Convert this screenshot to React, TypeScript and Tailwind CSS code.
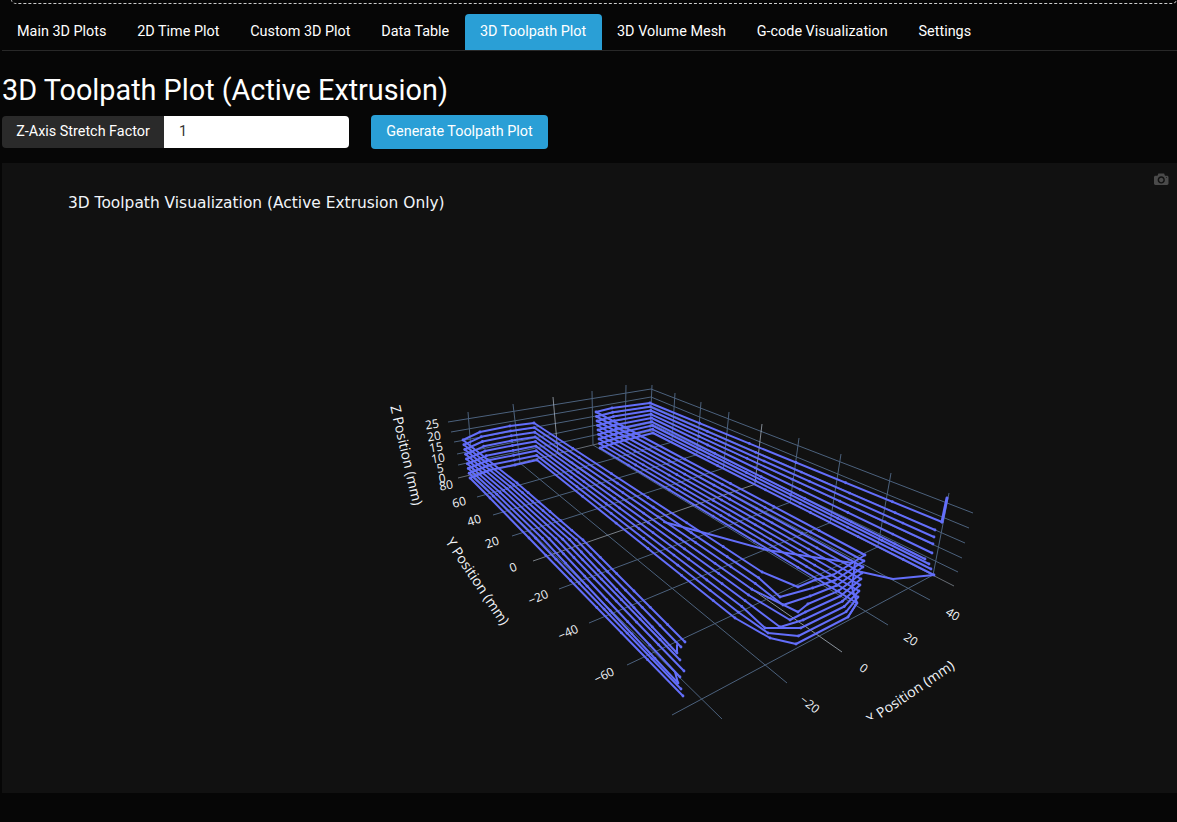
type P = [number, number];
const lerp = (a: P, b: P, t: number): P => [a[0] + (b[0] - a[0]) * t, a[1] + (b[1] - a[1]) * t];
const pts = (l: P[]) => l.map((p) => `${p[0].toFixed(1)},${p[1].toFixed(1)}`).join(" ");

const tabs = ["Main 3D Plots", "2D Time Plot", "Custom 3D Plot", "Data Table", "3D Toolpath Plot", "3D Volume Mesh", "G-code Visualization", "Settings"];

const LAYERS = 9;
const leftTips: P[] = [[685, 642], [681, 647], [677, 653], [680, 660], [684, 671], [680, 677], [678, 683], [681, 689], [683, 696]];
const rightTips: P[] = [[942, 522], [935, 530], [934, 537], [933, 544], [932, 553], [925, 559], [929, 564], [931, 569], [934, 575]];
const corner1: P[] = [[798, 587], [780, 597], [783, 605], [798, 612], [790, 620], [780, 627], [765, 628], [768, 633], [770, 638]];
const before: [P, P][] = [
  [[583, 540], [529, 538]],
  [[517, 483], [490, 498]],
  [[463, 440], [470, 478]],
  [[480, 432], [490, 470]],
  [[510, 426], [515, 465]],
  [[534, 423], [537, 460]],
  [[762, 572], [735, 618]],
];
const after: [P, P][] = [
  [[815, 580], [796, 644]],
  [[833, 575], [848, 617]],
  [[865, 555], [857, 603]],
  [[596, 412], [600, 448]],
  [[612, 408], [618, 442]],
  [[650, 403], [653, 433]],
];

const layers: P[][] = Array.from({ length: LAYERS }, (_, k) => {
  const t = k / (LAYERS - 1);
  return [
    leftTips[k],
    ...before.map((c) => lerp(c[0], c[1], t)),
    corner1[k],
    ...after.map((c) => lerp(c[0], c[1], t)),
    rightTips[k],
  ];
});

const markers: P[] = [];
layers.forEach((l, k) => {
  l.forEach((p, i) => {
    markers.push(p);
    const n = l[i + 1];
    if (n && Math.hypot(n[0] - p[0], n[1] - p[1]) > 80) {
      [0.17, 0.34, 0.5, 0.67, 0.83].forEach((f) => markers.push(lerp(p, n, f + (k % 3) * 0.03)));
    }
  });
});

const zLeft: P[] = [[448, 422], [451, 432], [454, 442], [457, 454], [458, 465], [458, 478]];
const zBack: P[] = [[651, 389], [651, 397], [651, 406], [650, 414], [650, 423], [650, 431]];
const zRight: P[] = [[973, 513], [969, 528], [965, 543], [962, 558], [958, 572], [954, 586]];
const xLines: [P, P, boolean][] = [
  [[473, 475], [723, 720], false],
  [[520, 463], [787, 683], false],
  [[558, 454], [842, 652], true],
  [[593, 445], [888, 625], false],
  [[625, 437], [930, 600], false],
];
const leftV: [P, P, boolean][] = [
  [[468, 412], [473, 475], false],
  [[513, 404], [520, 463], false],
  [[553, 397], [558, 454], true],
  [[592, 391], [593, 445], false],
  [[626, 385], [625, 437], false],
  [[652, 385], [650, 431], false],
];
const yTop: P[] = [[675, 393], [701, 402], [729, 412], [762, 424], [799, 438], [841, 454], [891, 473], [949, 493]];
const yStart: P[] = [[477, 497], [493, 515], [512, 536], [533, 561], [559, 589], [589, 623], [627, 665], [672, 715]];
const yBottom: P[] = yTop.map((p) => {
  const x = 650 + (p[0] - 652) * (283 / 297);
  return [x, 431 + (x - 650) * 0.509] as P;
});

const labels: { t: string; x: number; y: number; r: number }[] = [
  { t: "25", x: 432, y: 424, r: -10 },
  { t: "20", x: 434, y: 436, r: -10 },
  { t: "15", x: 436, y: 447, r: -10 },
  { t: "10", x: 438, y: 458, r: -10 },
  { t: "5", x: 440, y: 468, r: -10 },
  { t: "0", x: 442, y: 478, r: -10 },
  { t: "80", x: 446, y: 485, r: -12 },
  { t: "60", x: 459, y: 502, r: -15 },
  { t: "40", x: 474, y: 520, r: -18 },
  { t: "20", x: 492, y: 542, r: -20 },
  { t: "0", x: 513, y: 567, r: -22 },
  { t: "−20", x: 538, y: 597, r: -24 },
  { t: "−40", x: 568, y: 632, r: -25 },
  { t: "−60", x: 604, y: 675, r: -27 },
  { t: "−20", x: 810, y: 704, r: 38 },
  { t: "0", x: 864, y: 668, r: 36 },
  { t: "20", x: 911, y: 639, r: 34 },
  { t: "40", x: 953, y: 614, r: 32 },
];
const titles: { t: string; x: number; y: number; r: number }[] = [
  { t: "Z Position (mm)", x: 407, y: 455, r: 77 },
  { t: "Y Position (mm)", x: 478, y: 581, r: 56 },
  { t: "X Position (mm)", x: 910, y: 692, r: -34 },
];

const G = "#506784";
const Z = "#c8d4e3";

function Plot() {
  return (
    <svg viewBox="2 163 1175 630" className="block w-full h-full" style={{ fontFamily: "'Open Sans', sans-serif" }}>
      <defs>
        <clipPath id="scene">
          <rect x="2" y="163" width="1175" height="556" />
        </clipPath>
      </defs>
      <text x="68" y="208" fontSize="15.45" fill="#f2f5fa" style={{ fontFamily: "'DejaVu Sans', sans-serif" }}>
        3D Toolpath Visualization (Active Extrusion Only)
      </text>
      <g clipPath="url(#scene)">
        <g strokeWidth="1" fill="none" opacity="0.95">
          {zLeft.map((p, i) => (
            <line key={`a${i}`} x1={p[0]} y1={p[1]} x2={zBack[i][0]} y2={zBack[i][1]} stroke={i === 5 ? Z : G} strokeOpacity={i === 5 ? 0.5 : 1} />
          ))}
          {zRight.map((p, i) => (
            <line key={`b${i}`} x1={zBack[i][0]} y1={zBack[i][1]} x2={p[0]} y2={p[1]} stroke={i === 5 ? Z : G} strokeOpacity={i === 5 ? 0.5 : 1} />
          ))}
          {xLines.map(([a, b, z], i) => (
            <line key={`c${i}`} x1={a[0]} y1={a[1]} x2={b[0]} y2={b[1]} stroke={z ? Z : G} strokeOpacity={z ? 0.7 : 1} />
          ))}
          {leftV.map(([a, b, z], i) => (
            <line key={`d${i}`} x1={a[0]} y1={a[1]} x2={b[0]} y2={b[1]} stroke={z ? Z : G} strokeOpacity={z ? 0.65 : 1} />
          ))}
          {yTop.map((p, i) => (
            <line key={`e${i}`} x1={p[0]} y1={p[1]} x2={yBottom[i][0]} y2={yBottom[i][1]} stroke={i === 3 ? Z : G} strokeOpacity={i === 3 ? 0.65 : 1} />
          ))}
          {yStart.map((p, i) => (
            <line key={`f${i}`} x1={p[0]} y1={p[1]} x2={yBottom[i][0]} y2={yBottom[i][1]} stroke={i === 3 ? Z : G} strokeOpacity={i === 3 ? 0.6 : 1} />
          ))}
        </g>
        <g fill="none" stroke="#636efa" strokeWidth="2" strokeLinejoin="round" strokeLinecap="round">
          {layers.map((l, i) => (
            <polyline key={i} points={pts(l)} />
          ))}
          <polyline points="664,522 705,533 767,550 852,563" />
          <polyline points="857,571 893,579 934,575" />
          <polyline points="855,562 852,588 857,603 848,617" />
          <polyline points="947,498 942,522" strokeWidth="3" />
          <polyline points="677,645 677,653" />
          <polyline points="675,672 678,683" />
        </g>
        <g fill="#636efa">
          {markers.map((p, i) => (
            <circle key={i} cx={p[0]} cy={p[1]} r="1.4" />
          ))}
        </g>
        <g fill="#f2f5fa" textAnchor="middle" dominantBaseline="central">
          {labels.map((l, i) => (
            <text key={i} transform={`translate(${l.x} ${l.y}) rotate(${l.r})`} fontSize="12">
              {l.t}
            </text>
          ))}
          {titles.map((l, i) => (
            <text key={i} transform={`translate(${l.x} ${l.y}) rotate(${l.r})`} fontSize="14">
              {l.t}
            </text>
          ))}
        </g>
      </g>
      <g transform="translate(1154 172) scale(0.0145)" fill="#4a4a4a">
        <path
          transform="matrix(1 0 0 -1 0 850)"
          d="m500 450c-83 0-150-67-150-150 0-83 67-150 150-150 83 0 150 67 150 150 0 83-67 150-150 150z m400 150h-120c-16 0-34 13-39 29l-31 93c-6 15-23 28-40 28h-340c-16 0-34-13-39-28l-31-94c-5-15-23-28-40-28h-120c-55 0-100-45-100-100v-450c0-55 45-100 100-100h800c55 0 100 45 100 100v450c0 55-45 100-100 100z m-400-550c-138 0-250 112-250 250 0 138 112 250 250 250 138 0 250-112 250-250 0-138-112-250-250-250z m365 380c-19 0-35 16-35 35 0 19 16 35 35 35 19 0 35-16 35-35 0-19-16-35-35-35z"
        />
      </g>
    </svg>
  );
}

export default function App() {
  return (
    <div className="h-[822px] w-full overflow-hidden bg-[#060606] font-['Roboto',sans-serif] text-white">
      <div className="h-[14px] overflow-hidden pl-[11px]">
        <div className="-mt-[56px] h-[60px] rounded-[5px] border border-dashed border-[#cccccc]" />
      </div>
      <nav className="ml-[1.6px] flex h-[37px] border-b border-[#282828]">
        {tabs.map((t) => (
          <div
            key={t}
            className={
              t === "3D Toolpath Plot"
                ? "flex h-[36px] items-center rounded-t-[4px] bg-[#2a9fd6] px-[15.4px] pb-[1px] text-[14.4px] text-white"
                : "flex h-[36px] items-center px-[15.4px] pb-[1px] text-[14.4px] text-white"
            }
          >
            {t}
          </div>
        ))}
      </nav>
      <h3 className="mt-[22px] h-[34px] pl-[2px] text-[28.8px] leading-[34px] font-normal">3D Toolpath Plot (Active Extrusion)</h3>
      <div className="mt-[8px] flex h-[34px] items-center pl-[2px]">
        <div className="flex h-[32px] w-[347px] text-[14.4px]">
          <div className="flex w-[162px] items-center justify-center rounded-l-[4px] bg-[#2a2a2a]">Z-Axis Stretch Factor</div>
          <div className="flex flex-1 items-center rounded-r-[4px] bg-white pl-[15px] text-[#333333]">1</div>
        </div>
        <button className="ml-[22px] h-[34px] w-[177px] rounded-[4px] bg-[#2a9fd6] pb-[1px] text-[14.4px] text-white">Generate Toolpath Plot</button>
      </div>
      <div className="mt-[14px] ml-[2px] h-[630px] bg-[#111111]">
        <Plot />
      </div>
    </div>
  );
}
